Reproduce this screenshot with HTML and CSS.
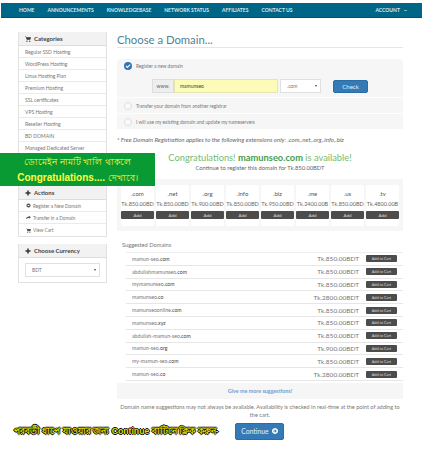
FILE: index.html
```html
<!DOCTYPE html>
<html lang="en">

<head>
    <meta charset="UTF-8">
    <meta name="viewport" content="width=device-width, initial-scale=1.0">
    <title>Choose a Domain</title>
    <link rel="stylesheet" href="styles.css">
</head>

<body>
    <nav class="topnav">
        <a href="#">HOME</a>
        <a href="#">ANNOUNCEMENTS</a>
        <a href="#">KNOWLEDGEBASE</a>
        <a href="#">NETWORK STATUS</a>
        <a href="#">AFFILIATES</a>
        <a href="#">CONTACT US</a>
        <a href="#" class="account">ACCOUNT <span class="caret-small"></span></a>
    </nav>

    <div class="page">
        <aside class="sidebar">
            <div class="panel panel-cats">
                <div class="panel-head">
                    <svg class="ico" viewBox="0 0 12 12"><path d="M0 1h2l.5 1.500H12l-1.500 5H3.500L1.500 2H0zM4 9a1.300 1.300 0 1 0 .01 0zM9.500 9a1.300 1.300 0 1 0 .01 0z" /></svg>
                    Categories
                </div>
                <a href="#">Regular SSD Hosting</a>
                <a href="#">WordPress Hosting</a>
                <a href="#">Linux Hosting Plan</a>
                <a href="#">Premium Hosting</a>
                <a href="#">SSL certificates</a>
                <a href="#">VPS Hosting</a>
                <a href="#">Reseller Hosting</a>
                <a href="#">BD DOMAIN</a>
                <a href="#">Managed Dedicated Server</a>
            </div>

            <div class="panel panel-actions">
                <div class="panel-head">
                    <svg class="ico" viewBox="0 0 12 12"><path d="M4.500 1h3v3.500H11v3H7.500V11h-3V7.500H1v-3h3.500z" /></svg>
                    Actions
                </div>
                <a href="#">
                    <svg class="ico-sm" viewBox="0 0 12 12"><path d="M6 1a5 5 0 1 0 .01 0zM4 5h4v2H4z" fill-rule="evenodd" /></svg>
                    Register a New Domain
                </a>
                <a href="#">
                    <svg class="ico-sm" viewBox="0 0 12 12"><path d="M7 2l5 3.500L7 9V7C4 7 2 8 0 10c.5-3.500 3-6 7-6.200z" /></svg>
                    Transfer in a Domain
                </a>
                <a href="#">
                    <svg class="ico-sm" viewBox="0 0 12 12"><path d="M0 1h2l.5 1.500H12l-1.500 5H3.500L1.500 2H0zM4 9a1.300 1.300 0 1 0 .01 0zM9.500 9a1.300 1.300 0 1 0 .01 0z" /></svg>
                    View Cart
                </a>
            </div>

            <div class="panel">
                <div class="panel-head">
                    <svg class="ico" viewBox="0 0 12 12"><path d="M4.500 1h3v3.500H11v3H7.500V11h-3V7.500H1v-3h3.500z" /></svg>
                    Choose Currency
                </div>
                <div class="currency-body">
                    <div class="fake-select">BDT <span class="caret"></span></div>
                </div>
            </div>
        </aside>

        <main class="main">
            <h1>Choose a Domain...</h1>

            <div class="options">
                <div class="opt opt-first">
                    <div class="opt-line">
                        <span class="radio checked">
                            <svg viewBox="0 0 12 12"><path d="M3 6l2.200 2.200L9.200 4" fill="none" stroke="#fff" stroke-width="1.600" /></svg>
                        </span>
                        Register a new domain
                    </div>
                    <div class="domain-row">
                        <span class="www">www.</span>
                        <span class="domain-input">mamunseo</span>
                        <span class="fake-select tld">.com <span class="caret"></span></span>
                        <button class="btn btn-check">Check</button>
                    </div>
                </div>
                <div class="opt">
                    <div class="opt-line"><span class="radio"></span> Transfer your domain from another registrar</div>
                </div>
                <div class="opt">
                    <div class="opt-line"><span class="radio"></span> I will use my existing domain and update my nameservers</div>
                </div>
            </div>

            <p class="free-note">* Free Domain Registration applies to the following extensions only: .com,.net,.org,.info,.biz</p>

            <div class="congrats">Congratulations! <b>mamunseo.com</b> is available!</div>
            <div class="congrats-sub">Continue to register this domain for Tk.850.00BDT</div>

            <div class="tlds">
                <div class="tld-card"><div class="tld-name">.com</div><div class="tld-price">Tk.850.00BD</div><button class="btn-add">Add</button></div>
                <div class="tld-card"><div class="tld-name">.net</div><div class="tld-price">Tk.850.00BD</div><button class="btn-add">Add</button></div>
                <div class="tld-card"><div class="tld-name">.org</div><div class="tld-price">Tk.900.00BD</div><button class="btn-add">Add</button></div>
                <div class="tld-card"><div class="tld-name">.info</div><div class="tld-price">Tk.850.00BD</div><button class="btn-add">Add</button></div>
                <div class="tld-card"><div class="tld-name">.biz</div><div class="tld-price">Tk.950.00BD</div><button class="btn-add">Add</button></div>
                <div class="tld-card"><div class="tld-name">.me</div><div class="tld-price">Tk.2400.00B</div><button class="btn-add">Add</button></div>
                <div class="tld-card"><div class="tld-name">.us</div><div class="tld-price">Tk.850.00BD</div><button class="btn-add">Add</button></div>
                <div class="tld-card"><div class="tld-name">.tv</div><div class="tld-price">Tk.4800.00B</div><button class="btn-add">Add</button></div>
            </div>

            <div class="suggest-title">Suggested Domains</div>
            <div class="suggest">
                <div class="s-row"><span class="s-name">mamun-seo<b>.com</b></span><span class="s-price">Tk.850.00BDT</span><button class="btn-cart">Add to Cart</button></div>
                <div class="s-row"><span class="s-name">abdullahmamunseo<b>.com</b></span><span class="s-price">Tk.850.00BDT</span><button class="btn-cart">Add to Cart</button></div>
                <div class="s-row"><span class="s-name">mymamunseo<b>.com</b></span><span class="s-price">Tk.850.00BDT</span><button class="btn-cart">Add to Cart</button></div>
                <div class="s-row"><span class="s-name">mamunseo<b>.co</b></span><span class="s-price">Tk.2800.00BDT</span><button class="btn-cart">Add to Cart</button></div>
                <div class="s-row"><span class="s-name">mamunseoonline<b>.com</b></span><span class="s-price">Tk.850.00BDT</span><button class="btn-cart">Add to Cart</button></div>
                <div class="s-row"><span class="s-name">mamunseo<b>.xyz</b></span><span class="s-price">Tk.850.00BDT</span><button class="btn-cart">Add to Cart</button></div>
                <div class="s-row"><span class="s-name">abdullah-mamun-seo<b>.com</b></span><span class="s-price">Tk.850.00BDT</span><button class="btn-cart">Add to Cart</button></div>
                <div class="s-row"><span class="s-name">mamun-seo<b>.org</b></span><span class="s-price">Tk.900.00BDT</span><button class="btn-cart">Add to Cart</button></div>
                <div class="s-row"><span class="s-name">my-mamun-seo<b>.com</b></span><span class="s-price">Tk.850.00BDT</span><button class="btn-cart">Add to Cart</button></div>
                <div class="s-row"><span class="s-name">mamun-seo<b>.co</b></span><span class="s-price">Tk.2800.00BDT</span><button class="btn-cart">Add to Cart</button></div>
            </div>

            <div class="more">Give me more suggestions!</div>
            <p class="disclaimer">Domain name suggestions may not always be available. Availability is checked in real-time at the point of adding to the cart.</p>

            <div class="continue-wrap">
                <button class="btn btn-continue">Continue
                    <svg viewBox="0 0 12 12"><path d="M6 0a6 6 0 1 0 .01 0zM6 2.500L9.500 6 6 9.500 5 8.500 6.700 6.800H2.500V5.200h4.200L5 3.500z" fill="#fff" fill-rule="evenodd" /></svg>
                </button>
            </div>
        </main>
    </div>

    <div class="banner">
        <div class="banner-bn">ডোমেইন নামটি খালি থাকলে</div>
        <div class="banner-en">Congratulations.... <span>দেখাবে।</span></div>
    </div>
    <div class="hint">পরবর্তী ধাপে যাওয়ার জন্য Continue বাটিনে ক্লিক করুন-</div>
</body>

</html>
```

FILE: styles.css
```css
* {
    box-sizing: border-box;
}

body {
    margin: 0;
    position: relative;
    height: 450px;
    overflow: hidden;
    background: #fff;
    font-family: "Lato", "Noto Sans", sans-serif;
    font-size: 5.5px;
    color: #666;
}

a {
    color: inherit;
    text-decoration: none;
}

button {
    font-family: inherit;
    border: 0;
    padding: 0;
}

/* top bar */
.topnav {
    margin: 3px 1px 0;
    height: 15px;
    display: flex;
    align-items: center;
    padding: 0 0 0 18px;
    gap: 13px;
    background: #006687;
    border-bottom: 1px solid #02506b;
    color: #dce9ee;
    font-size: 5px;
    font-weight: 700;
}

.topnav .account {
    margin-left: auto;
    margin-right: 15px;
}

.caret-small {
    display: inline-block;
    width: 3px;
    height: 1px;
    margin-left: 3px;
    vertical-align: middle;
    background: #7fb0c2;
}

/* layout */
.page {
    display: grid;
    grid-template-columns: 89px 286px;
    column-gap: 10px;
    padding: 14px 0 0 18px;
}

/* sidebar */
.panel {
    border: 1px solid #e2e2e2;
    border-top: 0;
    margin-bottom: 7px;
    background: #fff;
}

.panel-cats {
    height: 130px;
    margin-bottom: 24px;
}

.panel-head {
    height: 14px;
    display: flex;
    align-items: center;
    gap: 3px;
    padding-left: 6px;
    background: #f2f2f2;
    border-bottom: 1px solid #ddd;
    color: #444;
    font-size: 6px;
    font-weight: 700;
}

.ico {
    width: 6px;
    height: 6px;
    fill: #333;
}

.ico-sm {
    width: 5px;
    height: 5px;
    fill: #555;
    margin-right: 2px;
}

.panel > a {
    display: flex;
    align-items: center;
    height: 12px;
    padding-left: 6px;
    border-bottom: 1px solid #ebebeb;
    color: #777;
    font-size: 5px;
}

.panel-actions > a {
    padding-left: 7px;
    font-size: 4.700px;
}

.panel > a:last-child {
    border-bottom: 0;
}

.currency-body {
    padding: 5px 6px;
}

.fake-select {
    position: relative;
    display: flex;
    align-items: center;
    height: 14px;
    padding-left: 6px;
    border: 1px solid #e0e0e0;
    background: #fff;
    color: #777;
    font-size: 5px;
}

.caret {
    position: absolute;
    right: 3px;
    top: 50%;
    margin-top: -1px;
    border: 1.500px solid transparent;
    border-top: 2.500px solid #444;
    border-bottom: 0;
}

/* main column */
.main h1 {
    margin: 0;
    height: 16px;
    border-bottom: 1px solid #e6e6e6;
    color: #4f7f96;
    font-size: 11.300px;
    font-weight: 400;
    line-height: 16px;
}

.options {
    margin-top: 11px;
    border-radius: 3px;
    background: #f6f6f6;
}

.opt {
    border-bottom: 1px solid #fff;
    padding: 0 0 0 7px;
    height: 16px;
    display: flex;
    align-items: center;
}

.opt-first {
    height: 39px;
    display: block;
    padding-top: 3px;
}

.opt-line {
    display: flex;
    align-items: center;
    gap: 4px;
    color: #777;
    font-size: 4.750px;
}

.radio {
    width: 8px;
    height: 8px;
    flex: none;
    border: 1px solid #ddd;
    border-radius: 50%;
    background: #fafafa;
}

.radio.checked {
    border: 0;
    background: #2f76b8;
}

.radio svg {
    display: block;
}

.domain-row {
    display: flex;
    align-items: center;
    height: 14px;
    margin: 9px 0 0 28px;
}

.www {
    width: 22px;
    height: 14px;
    line-height: 13px;
    text-align: center;
    border: 1px solid #ddd;
    background: #eee;
    color: #666;
    font-size: 5px;
}

.domain-input {
    width: 104px;
    height: 14px;
    line-height: 13px;
    padding-left: 5px;
    border: 1px solid #e6e6b0;
    background: #fcfcb8;
    color: #444;
    font-size: 5px;
}

.tld {
    width: 41px;
    margin-left: 2px;
}

.btn {
    border-radius: 2px;
    background: #337ab7;
    border: 1px solid #2e6da4;
    color: #e8f0f6;
}

.btn-check {
    width: 35px;
    height: 13px;
    margin-left: 12px;
    font-size: 6px;
}

.free-note {
    margin: 6px 0 0;
    color: #666;
    font-size: 6.100px;
    font-style: italic;
    line-height: 7px;
}

.congrats {
    margin-top: 8px;
    color: #74bb74;
    font-size: 9.300px;
    line-height: 13px;
    text-align: center;
}

.congrats b {
    color: #459e50;
    font-weight: 700;
}

.congrats-sub {
    color: #666;
    font-size: 5.800px;
    line-height: 8px;
    text-align: center;
}

.tlds {
    display: grid;
    grid-template-columns: repeat(8, 33px);
    column-gap: 2px;
    margin-top: 7px;
    height: 52px;
    padding: 6px 3px 0 4px;
    background: #f6f6f6;
}

.tld-card {
    height: 41px;
    padding: 5px 0 0;
    background: #fff;
    border-radius: 2px;
    text-align: center;
}

.tld-name {
    height: 10px;
    color: #555;
    font-size: 6px;
    line-height: 8px;
}

.tld-price {
    height: 11px;
    color: #666;
    font-size: 5.500px;
    line-height: 8px;
    white-space: nowrap;
}

.btn-add {
    display: block;
    width: 100%;
    height: 8px;
    border-radius: 1px;
    background: #4c4c4c;
    color: #ddd;
    font-size: 4.500px;
}

.suggest-title {
    margin: 10px 0 0 5px;
    color: #777;
    font-size: 5.700px;
    line-height: 8px;
}

.suggest {
    margin: 3px 0 0 9px;
    border-top: 1px solid #eee;
}

.s-row {
    display: flex;
    align-items: center;
    height: 12.800px;
    padding: 0 6px 0 6px;
    border-bottom: 1px solid #e6e6e6;
}

.s-name {
    flex: 1;
    color: #777;
    font-size: 5.200px;
}

.s-name b {
    color: #444;
    font-weight: 400;
}

.s-price {
    margin-right: 7px;
    color: #777;
    font-size: 6.500px;
}

.btn-cart {
    width: 31px;
    height: 7px;
    border-radius: 1px;
    background: #4c4c4c;
    color: #ddd;
    font-size: 3.800px;
}

.more {
    margin-top: 2px;
    height: 16px;
    line-height: 16px;
    background: #f6f6f6;
    color: #6f9fd0;
    font-size: 5.400px;
    font-weight: 700;
    text-align: center;
}

.disclaimer {
    margin: 4px 0 0;
    color: #777;
    font-size: 5.600px;
    line-height: 8.500px;
    text-align: center;
}

.continue-wrap {
    padding: 3px 0 0 118px;
}

.btn-continue {
    display: flex;
    align-items: center;
    justify-content: center;
    gap: 3px;
    width: 49px;
    height: 17px;
    font-size: 6.800px;
}

.btn-continue svg {
    width: 6px;
    height: 6px;
}

/* annotations on top of the screenshot */
.banner {
    position: absolute;
    left: 0;
    top: 153px;
    width: 155px;
    height: 33px;
    padding-top: 1px;
    background: #0a9a34;
    color: #ffff3c;
    text-align: center;
    font-weight: 700;
}

.banner-bn {
    font-size: 9.200px;
    font-weight: 400;
    line-height: 15px;
}

.banner-en {
    font-family: "Liberation Sans", sans-serif;
    font-size: 10px;
    line-height: 17px;
}

.banner-en span {
    font-size: 8.500px;
    font-weight: 400;
}

.hint {
    position: absolute;
    left: 14px;
    top: 424px;
    color: #e0e000;
    font-family: "Liberation Sans", sans-serif;
    font-size: 8.700px;
    font-weight: 700;
    line-height: 14px;
    white-space: nowrap;
    text-shadow: 1px 0 0 #000, -1px 0 0 #000, 0 1px 0 #000, 0 -1px 0 #000;
}
```
